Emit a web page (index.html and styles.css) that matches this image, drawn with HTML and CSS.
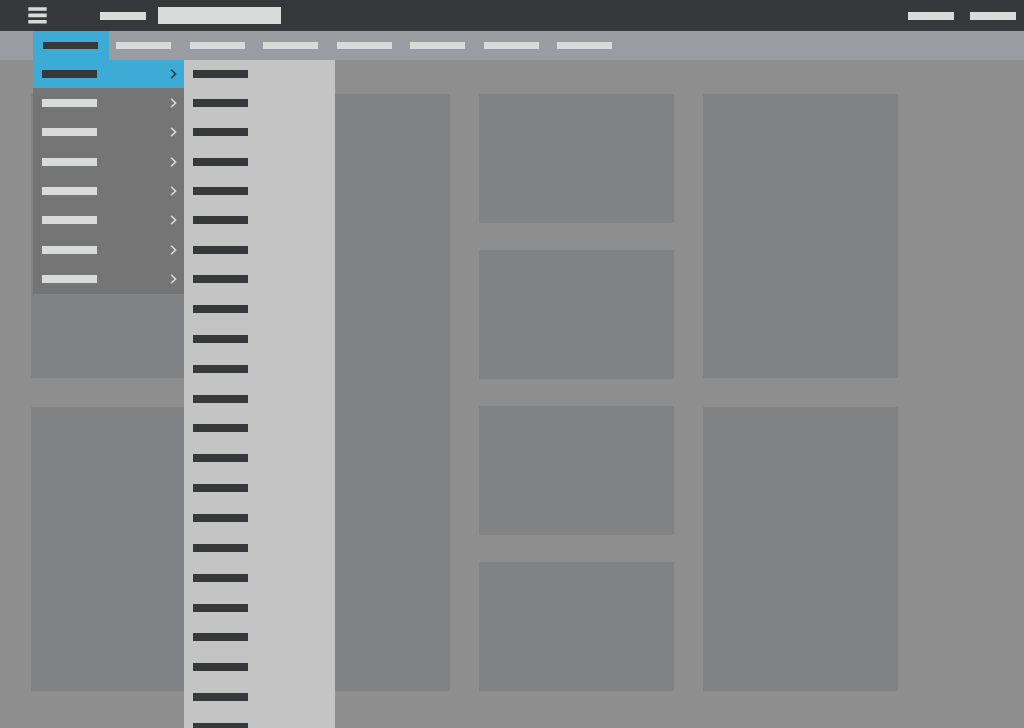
FILE: index.html
```html
<!DOCTYPE html>
<html lang="en">
<head>
    <meta charset="UTF-8">
    <meta name="viewport" content="width=device-width, initial-scale=1.0">
    <title>Menu wireframe</title>
    <link rel="stylesheet" href="styles.css">
</head>
<body>

<header class="topbar">
    <button class="burger" type="button" aria-label="Menu">
        <svg width="19" height="17" viewBox="0 0 19 17">
            <path d="M.3 .2h18.4v3.6H.3zM.3 6.6h18.4v3.6H.3zM.3 13h18.4v3.6H.3z" fill="currentColor"/>
        </svg>
    </button>
    <a href="#" class="toplink" aria-label="Home"></a>
    <input class="search" type="search" aria-label="Search">
    <div class="account">
        <a href="#" class="toplink" aria-label="Account"></a>
        <a href="#" class="toplink" aria-label="Sign out"></a>
    </div>
</header>

<nav class="navbar">
    <a href="#" class="tab-active" aria-label="Section 1"><span class="bar"></span></a>
    <div class="tabs">
        <a href="#" aria-label="Section 2"><span class="bar"></span></a>
        <a href="#" aria-label="Section 3"><span class="bar"></span></a>
        <a href="#" aria-label="Section 4"><span class="bar"></span></a>
        <a href="#" aria-label="Section 5"><span class="bar"></span></a>
        <a href="#" aria-label="Section 6"><span class="bar"></span></a>
        <a href="#" aria-label="Section 7"><span class="bar"></span></a>
        <a href="#" aria-label="Section 8"><span class="bar"></span></a>
    </div>
</nav>

<main class="page">
    <div class="cards">
        <div class="column">
            <div class="card"></div>
            <div class="card"></div>
        </div>
        <div class="column">
            <div class="card"></div>
        </div>
        <div class="column column-small">
            <div class="card"></div>
            <div class="card"></div>
            <div class="card"></div>
            <div class="card"></div>
        </div>
        <div class="column">
            <div class="card"></div>
            <div class="card"></div>
        </div>
    </div>

    <!-- dropdown with its open submenu -->
    <div class="dropdown">
        <div class="menu rows">
            <a href="#" class="selected" aria-label="Category 1"><span class="bar"></span><svg class="arrow" viewBox="0 0 7 10"><path d="M1.2 .7l4.3 4.3-4.3 4.3"/></svg></a>
            <a href="#" aria-label="Category 2"><span class="bar"></span><svg class="arrow" viewBox="0 0 7 10"><path d="M1.2 .7l4.3 4.3-4.3 4.3"/></svg></a>
            <a href="#" aria-label="Category 3"><span class="bar"></span><svg class="arrow" viewBox="0 0 7 10"><path d="M1.2 .7l4.3 4.3-4.3 4.3"/></svg></a>
            <a href="#" aria-label="Category 4"><span class="bar"></span><svg class="arrow" viewBox="0 0 7 10"><path d="M1.2 .7l4.3 4.3-4.3 4.3"/></svg></a>
            <a href="#" aria-label="Category 5"><span class="bar"></span><svg class="arrow" viewBox="0 0 7 10"><path d="M1.2 .7l4.3 4.3-4.3 4.3"/></svg></a>
            <a href="#" aria-label="Category 6"><span class="bar"></span><svg class="arrow" viewBox="0 0 7 10"><path d="M1.2 .7l4.3 4.3-4.3 4.3"/></svg></a>
            <a href="#" aria-label="Category 7"><span class="bar"></span><svg class="arrow" viewBox="0 0 7 10"><path d="M1.2 .7l4.3 4.3-4.3 4.3"/></svg></a>
            <a href="#" aria-label="Category 8"><span class="bar"></span><svg class="arrow" viewBox="0 0 7 10"><path d="M1.2 .7l4.3 4.3-4.3 4.3"/></svg></a>
        </div>
        <div class="submenu">
            <div class="rows">
                <a href="#" aria-label="Item 1"><span class="bar"></span></a>
                <a href="#" aria-label="Item 2"><span class="bar"></span></a>
                <a href="#" aria-label="Item 3"><span class="bar"></span></a>
                <a href="#" aria-label="Item 4"><span class="bar"></span></a>
                <a href="#" aria-label="Item 5"><span class="bar"></span></a>
                <a href="#" aria-label="Item 6"><span class="bar"></span></a>
                <a href="#" aria-label="Item 7"><span class="bar"></span></a>
                <a href="#" aria-label="Item 8"><span class="bar"></span></a>
            </div>
            <div class="rows-more">
                <a href="#" aria-label="Item 9"><span class="bar"></span></a>
                <a href="#" aria-label="Item 10"><span class="bar"></span></a>
                <a href="#" aria-label="Item 11"><span class="bar"></span></a>
                <a href="#" aria-label="Item 12"><span class="bar"></span></a>
                <a href="#" aria-label="Item 13"><span class="bar"></span></a>
                <a href="#" aria-label="Item 14"><span class="bar"></span></a>
                <a href="#" aria-label="Item 15"><span class="bar"></span></a>
                <a href="#" aria-label="Item 16"><span class="bar"></span></a>
                <a href="#" aria-label="Item 17"><span class="bar"></span></a>
                <a href="#" aria-label="Item 18"><span class="bar"></span></a>
                <a href="#" aria-label="Item 19"><span class="bar"></span></a>
                <a href="#" aria-label="Item 20"><span class="bar"></span></a>
                <a href="#" aria-label="Item 21"><span class="bar"></span></a>
                <a href="#" aria-label="Item 22"><span class="bar"></span></a>
                <a href="#" aria-label="Item 23"><span class="bar"></span></a>
            </div>
        </div>
    </div>
</main>

</body>
</html>
```

FILE: styles.css
```css
* {
    box-sizing: border-box;
}
body {
    margin: 0;
    height: 100vh;
    display: flex;
    flex-direction: column;
    overflow: hidden;
    font-family: "Liberation Sans", Arial, sans-serif;
    background-color: #8e8e8e;
}
.bar {
    display: block;
    width: 55px;
    height: 8px;
    background-color: currentColor;
}

/* top bar */
.topbar {
    display: flex;
    align-items: center;
    flex-shrink: 0;
    height: 31px;
    padding: 0 8px 0 28px;
    color: #d9dada;
    background-color: #37383c;
}
.burger {
    display: flex;
    margin-right: 53px;
    padding: 0;
    border: none;
    background: none;
    color: inherit;
    cursor: pointer;
}
.toplink {
    width: 46px;
    height: 8px;
    background-color: #d9dada;
}
.search {
    width: 123px;
    height: 17px;
    margin-left: 12px;
    padding: 0 4px;
    border: none;
    border-radius: 0;
    background-color: #d9dada;
}
.account {
    display: flex;
    gap: 16px;
    margin-left: auto;
}

/* tabs */
.navbar {
    display: flex;
    flex-shrink: 0;
    height: 29px;
    padding-left: 33px;
    color: #d9dada;
    background-color: #9b9ca1;
}
.navbar .bar {
    height: 7px;
}
.tab-active {
    display: flex;
    align-items: center;
    width: 76px;
    padding-left: 10px;
    color: #37383c;
    background-color: #3cacd7;
}
.tabs {
    display: flex;
    align-items: center;
    justify-content: space-between;
    width: 496px;
    margin-left: 7px;
    color: #d9dada;
}
.tabs a {
    color: inherit;
}

/* cards */
.page {
    position: relative;
    flex: 1;
    min-height: 0;
}
.cards {
    display: grid;
    grid-template-columns: repeat(4, 1fr);
    gap: 29px;
    padding: 34px 126px 0 31px;
}
.column {
    display: flex;
    flex-direction: column;
    gap: 29px;
}
.column-small {
    gap: 27px;
}
.card {
    flex: 1;
    min-height: 284px;
    background-color: #818283;
}
.column-small .card {
    min-height: 129px;
}

/* dropdown */
.dropdown {
    position: absolute;
    top: 0;
    bottom: 0;
    left: 33px;
    display: flex;
    align-items: flex-start;
    overflow: hidden;
}
.rows {
    display: grid;
    grid-template-rows: 28px repeat(7, 1fr);
    height: 234px;
}
.rows-more {
    display: grid;
    grid-auto-rows: 1fr;
    height: 448px;
}
.rows a,
.rows-more a {
    display: flex;
    align-items: center;
    justify-content: space-between;
    padding: 0 7px 0 9px;
    color: inherit;
}
.menu {
    width: 151px;
    color: #d9dada;
    background-color: #757575;
}
.menu .selected {
    color: #37383c;
    background-color: #3cacd7;
}
.arrow {
    width: 7px;
    height: 10px;
    overflow: visible;
    fill: none;
    stroke: currentColor;
    stroke-width: 1.6;
}
.submenu {
    width: 151px;
    height: 100%;
    color: #37383c;
    background-color: #c4c4c4;
}
```
